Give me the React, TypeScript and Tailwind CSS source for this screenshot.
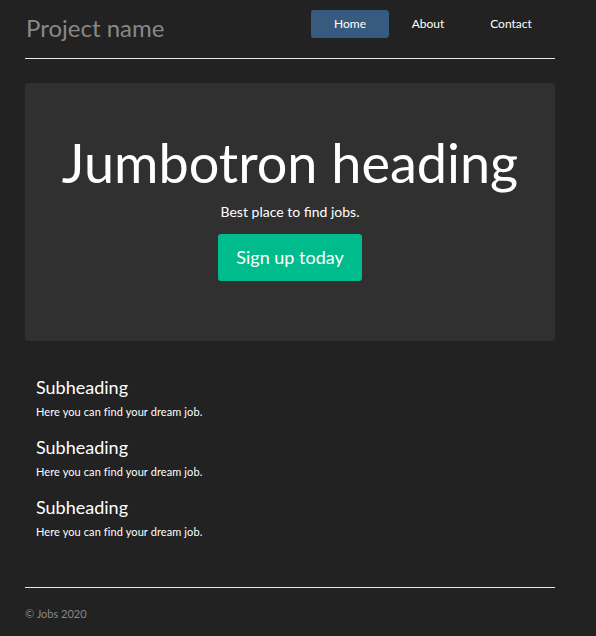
import React from 'react';

const navItems = [
  { label: 'Home', active: true },
  { label: 'About', active: false },
  { label: 'Contact', active: false },
];

const features = [1, 2, 3];

export default function App() {
  return (
    <div className="min-h-[636px] bg-[#222222] font-['Lato','Noto_Sans',sans-serif] text-white">
      <div className="ml-[25px] w-[530px]">
        {/* Header */}
        <header className="flex h-[59px] items-start justify-between border-b border-[#e5e5e5]">
          <h3 className="ml-[1px] mt-[11px] text-[24px] leading-[34px] text-[#888888]">Project name</h3>
          <nav className="mr-[5px] mt-[10px] flex">
            {navItems.map((item) => (
              <a
                key={item.label}
                className={`flex h-[28px] w-[78px] items-center justify-center rounded-[3px] text-[12px] ${
                  item.active ? 'bg-[#375a7f]' : ''
                } ${item.label === 'Contact' ? 'ml-[5px]' : ''}`}
              >
                {item.label}
              </a>
            ))}
          </nav>
        </header>

        {/* Jumbotron */}
        <section className="mt-[24px] flex h-[258px] flex-col items-center rounded-[4px] bg-[#303030] pt-[50px]">
          <h1 className="text-[54px] leading-[60px] font-normal">Jumbotron heading</h1>
          <p className="mt-[9px] text-[14px] leading-[20px]">Best place to find jobs.</p>
          <button className="mt-[12px] h-[47px] w-[144px] rounded-[3px] bg-[#00bc8c] text-[18px]">
            Sign up today
          </button>
        </section>

        {/* Features */}
        <section className="mt-[35px] px-[11px]">
          {features.map((n) => (
            <div key={n} className="mb-[17px]">
              <h4 className="text-[18px] leading-[22px]">Subheading</h4>
              <p className="mt-[7px] text-[11px] leading-[14px] tracking-[0.1px]">Here you can find your dream job.</p>
            </div>
          ))}
        </section>

        {/* Footer */}
        <footer className="mt-[48px] border-t border-[#e5e5e5] pt-[18px]">
          <p className="text-[11px] leading-[16px] text-[#888888]">© Jobs 2020</p>
        </footer>
      </div>
    </div>
  );
}
